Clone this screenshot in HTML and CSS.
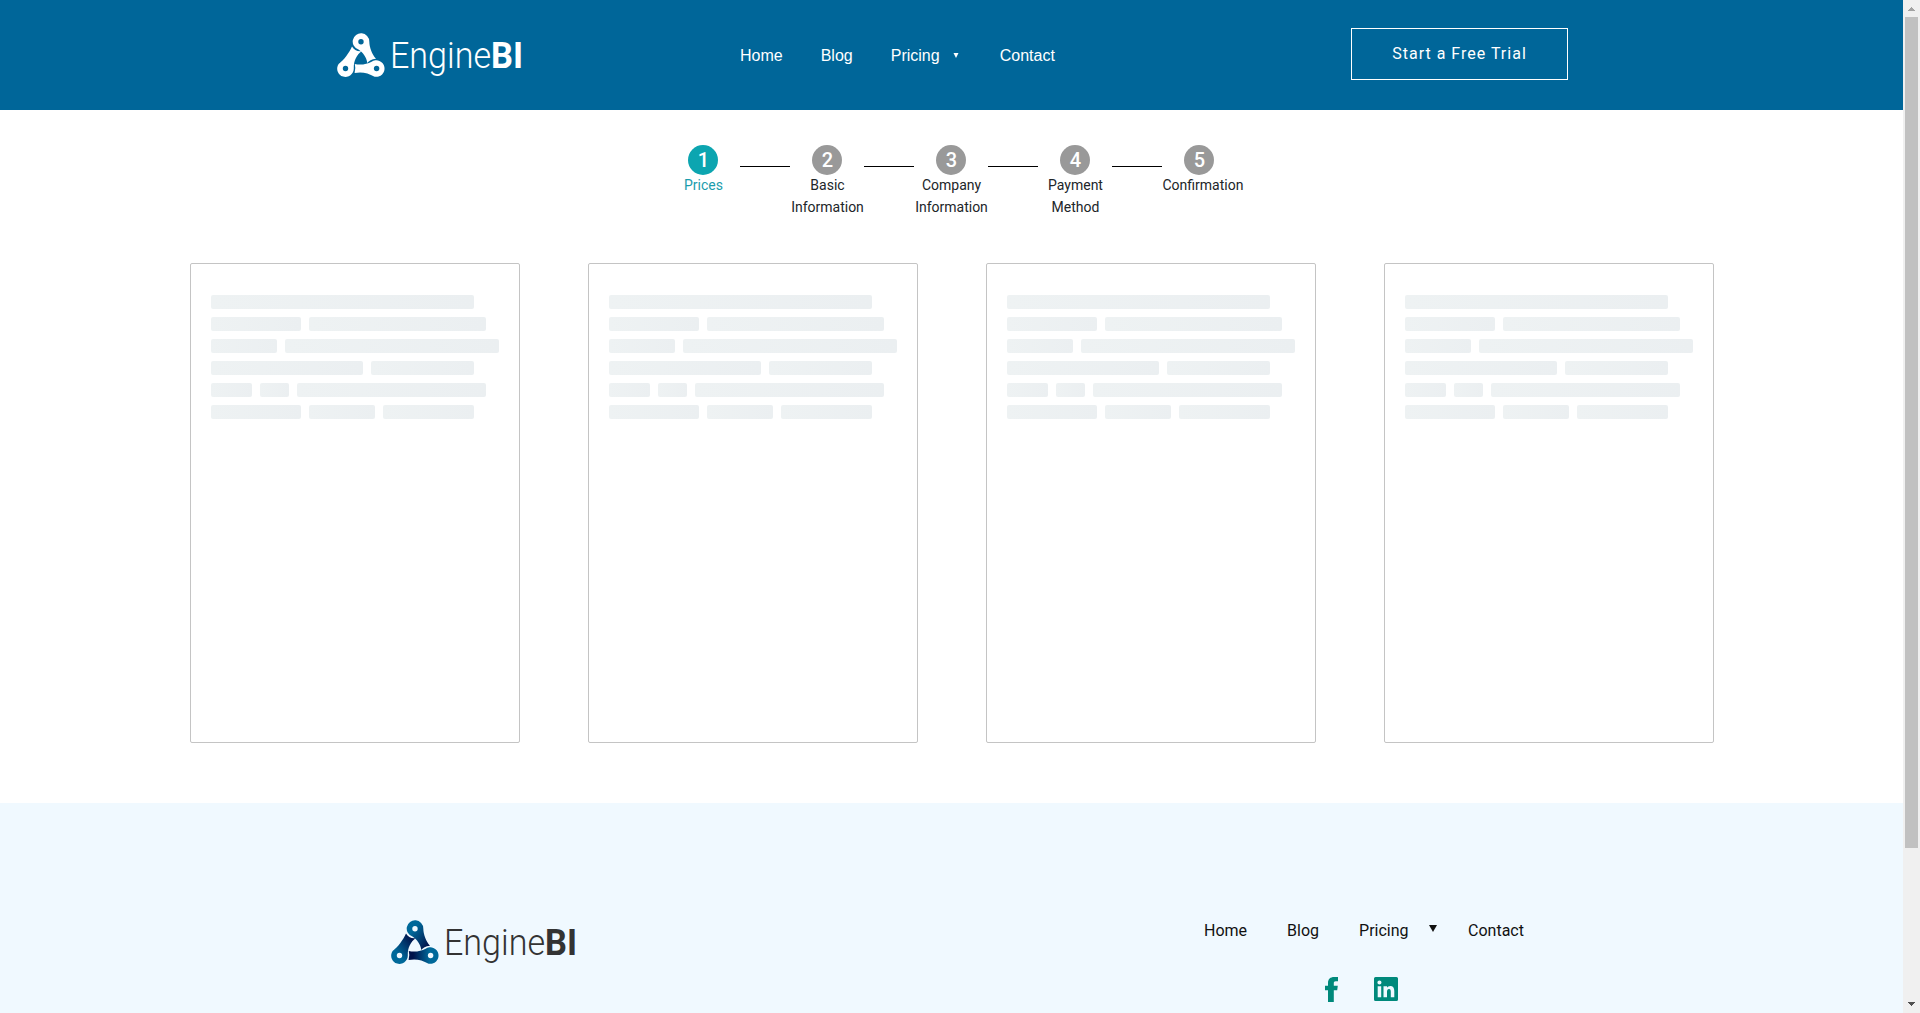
FILE: index.html
```html
<!DOCTYPE html>
<html lang="en">
<head>
<meta charset="utf-8">
<title>EngineBI - Prices</title>
<link rel="stylesheet" href="styles.css">
</head>
<body>
<svg class="defs" width="0" height="0" aria-hidden="true">
  <defs>
    <linearGradient id="blueA" x1="0" y1="1" x2="1" y2="0"><stop offset=".3" stop-color="#00699a"/><stop offset=".85" stop-color="#00124a"/></linearGradient>
    <linearGradient id="blueB" x1="0" y1="0" x2="1" y2="1"><stop offset=".3" stop-color="#00699a"/><stop offset=".9" stop-color="#00124a"/></linearGradient>
    <linearGradient id="blueC" x1="1" y1="0" x2="0" y2="0"><stop offset=".3" stop-color="#00699a"/><stop offset=".85" stop-color="#00124a"/></linearGradient>
    <symbol id="logo" viewBox="0 0 190 50">
      <g class="chain">
        <path class="link-a" d="M1.600 31 C7 27 12 20 15 13.500 C17 17 20 18.600 24.500 18.200 C19.500 22 16.500 28 16.800 35.600 A8.300 8.300 0 1 1 1.600 31Z"/>
        <path class="link-b" d="M32.300 8.500 C32.500 15 35 21 39 25.700 C34.500 26 32 28 30.300 30 C29.500 24 26 19.500 21.500 16.500 A8.300 8.300 0 1 1 32.300 8.500Z"/>
        <path class="link-c" d="M37.600 43.700 C31 39.800 25 38.600 17.600 39.900 Q19 35.500 17.800 31 C24 32.500 30 31 34.600 28.700 A8.300 8.300 0 1 1 37.600 43.700Z"/>
        <circle class="hole" cx="24" cy="8.700" r="2.700"/>
        <circle class="hole" cx="8.500" cy="35.500" r="2.700"/>
        <circle class="hole" cx="39.600" cy="35.500" r="2.700"/>
      </g>
      <text class="word-light" x="53" y="34.500" textLength="101" lengthAdjust="spacingAndGlyphs">Engine</text>
      <text class="word-bold" x="154" y="34.500" textLength="32" lengthAdjust="spacingAndGlyphs">BI</text>
    </symbol>
  </defs>
</svg>
<div class="window">
  <div class="page">
    <header class="header">
      <svg class="logo logo-white" width="190" height="50"><use href="#logo"/></svg>
      <nav class="nav">
        <a>Home</a><a>Blog</a><a class="has-menu">Pricing<svg width="6" height="5" viewBox="0 0 6 5"><path d="M.5 0H5.500L3 5Z" fill="currentColor"/></svg></a><a>Contact</a>
      </nav>
      <a class="trial">Start a Free Trial</a>
    </header>
    <main class="main">
      <ol class="steps">
        <li class="step active"><span class="num">1</span><span class="label">Prices</span></li>
        <li class="line"></li>
        <li class="step"><span class="num">2</span><span class="label">Basic Information</span></li>
        <li class="line"></li>
        <li class="step"><span class="num">3</span><span class="label">Company Information</span></li>
        <li class="line"></li>
        <li class="step"><span class="num">4</span><span class="label">Payment Method</span></li>
        <li class="line"></li>
        <li class="step"><span class="num">5</span><span class="label">Confirmation</span></li>
      </ol>
      <section class="cards">
        <div class="card">
          <div class="row"><i class="w263"></i></div>
          <div class="row"><i class="w90"></i><i class="w177"></i></div>
          <div class="row"><i class="w66"></i><i class="w214"></i></div>
          <div class="row"><i class="w152"></i><i class="w103"></i></div>
          <div class="row"><i class="w41"></i><i class="w29"></i><i class="w189"></i></div>
          <div class="row"><i class="w90"></i><i class="w66"></i><i class="w91"></i></div>
        </div>
        <div class="card">
          <div class="row"><i class="w263"></i></div>
          <div class="row"><i class="w90"></i><i class="w177"></i></div>
          <div class="row"><i class="w66"></i><i class="w214"></i></div>
          <div class="row"><i class="w152"></i><i class="w103"></i></div>
          <div class="row"><i class="w41"></i><i class="w29"></i><i class="w189"></i></div>
          <div class="row"><i class="w90"></i><i class="w66"></i><i class="w91"></i></div>
        </div>
        <div class="card">
          <div class="row"><i class="w263"></i></div>
          <div class="row"><i class="w90"></i><i class="w177"></i></div>
          <div class="row"><i class="w66"></i><i class="w214"></i></div>
          <div class="row"><i class="w152"></i><i class="w103"></i></div>
          <div class="row"><i class="w41"></i><i class="w29"></i><i class="w189"></i></div>
          <div class="row"><i class="w90"></i><i class="w66"></i><i class="w91"></i></div>
        </div>
        <div class="card">
          <div class="row"><i class="w263"></i></div>
          <div class="row"><i class="w90"></i><i class="w177"></i></div>
          <div class="row"><i class="w66"></i><i class="w214"></i></div>
          <div class="row"><i class="w152"></i><i class="w103"></i></div>
          <div class="row"><i class="w41"></i><i class="w29"></i><i class="w189"></i></div>
          <div class="row"><i class="w90"></i><i class="w66"></i><i class="w91"></i></div>
        </div>
      </section>
    </main>
    <footer class="footer">
      <svg class="logo logo-color" width="190" height="50"><use href="#logo"/></svg>
      <div class="foot-right">
        <nav class="foot-nav">
          <a>Home</a><a>Blog</a><a class="has-menu">Pricing<svg width="8" height="7" viewBox="0 0 8 7"><path d="M0 0H8L4 7Z" fill="currentColor"/></svg></a><a>Contact</a>
        </nav>
        <div class="social">
          <svg width="13" height="25" viewBox="0 0 13 25"><path d="M3 25V13.200H0V8.800H3V6C3 2 5.300 0 9.200 0H13V4.300H10.700C9.300 4.300 8.800 5 8.800 6.200V8.800H12.800L12.200 13.200H8.800V25Z" fill="#00897b"/></svg>
          <svg width="24" height="24" viewBox="0 0 24 24"><path fill="#00897b" fill-rule="evenodd" d="M1.500 0H22.500Q24 0 24 1.500V22.500Q24 24 22.500 24H1.500Q0 24 0 22.500V1.500Q0 0 1.500 0ZM3.700 9.200V20.300H7.200V9.200ZM5.450 3.500A2 2 0 1 0 5.450 7.600A2 2 0 1 0 5.450 3.500ZM9.500 9.200V20.300H13V14.800C13 13 13.700 11.900 15 11.900C16.400 11.900 16.800 13 16.800 14.800V20.300H20.300V14C20.300 10.700 19 8.900 16.300 8.900C14.700 8.900 13.600 9.700 13 10.700V9.200Z"/></svg>
        </div>
      </div>
    </footer>
  </div>
  <div class="scrollbar">
    <svg width="7" height="4" viewBox="0 0 7 4"><path d="M3 0H4V1H5V2H6V3H7V4H0V3H1V2H2V1H3Z" fill="#a3a3a3"/></svg>
    <div class="thumb"></div>
    <svg class="down" width="7" height="4" viewBox="0 0 7 4"><path d="M0 0H7V1H6V2H5V3H4V4H3V3H2V2H1V1H0Z" fill="#505050"/></svg>
  </div>
</div>
</body>
</html>
```
FILE: styles.css
```css
* { box-sizing: border-box; }
body { margin: 0; overflow: hidden; font-family: Roboto, "Liberation Sans", sans-serif; background: #fff; }
.defs { display: block; }
.window { display: flex; height: 1013px; overflow: hidden; }
.page { width: 1903px; height: 1013px; overflow: hidden; display: flex; flex-direction: column; }

.header { display: flex; height: 110px; flex: none; background: #006699; color: #fff; padding-left: 337px; }
.logo { flex: none; }
.header .logo { margin-top: 33px; }
.word-light { font: 300 36px Roboto, sans-serif; }
.word-bold { font: 700 36px Roboto, sans-serif; }
.logo-white { fill: #fff; --a: #fff; --b: #fff; --c: #fff; --hole: #006699; }
.logo-color { fill: #333; --a: url(#blueA); --b: url(#blueB); --c: url(#blueC); --hole: #f0f9ff; }
.link-a { fill: var(--a); }
.link-b { fill: var(--b); }
.link-c { fill: var(--c); }
.hole { fill: var(--hole); }

.nav { display: flex; gap: 38px; width: 611px; margin-left: 213px; padding-top: 47px; font: 16px/18px "Liberation Sans", Arial, sans-serif; }
.nav .has-menu { display: flex; width: 71px; }
.nav .has-menu svg { margin: 6px 0 0 13px; }
.trial { width: 217px; height: 52px; margin-top: 28px; border: 1px solid #fff; text-align: center; font-size: 16px; line-height: 50px; letter-spacing: 1px; }

.main { height: 693px; flex: none; padding-top: 35px; }
.steps { list-style: none; display: flex; height: 118px; margin: 0 0 0 666px; padding: 0; }
.step { width: 74px; flex: none; display: flex; flex-direction: column; align-items: center; }
.num { width: 30px; height: 30px; border-radius: 50%; background: #999; color: #fff; font-size: 20px; font-weight: 500; line-height: 30px; text-align: center; padding-left: 1px; }
.label { width: 74px; font-size: 14px; line-height: 22px; color: #212529; text-align: center; margin: -1px 0 0 1px; }
.active .num { background: #0ca5b0; }
.active .label { color: #1a9cac; }
.line { width: 50px; height: 1px; flex: none; background: #000; margin-top: 21px; }

.cards { display: flex; gap: 68px; padding-left: 190px; }
.card { width: 330px; height: 480px; flex: none; border: 1px solid #c4c4c4; border-radius: 2px; padding: 31px 20px; display: flex; flex-direction: column; gap: 8px; }
.row { display: flex; gap: 8px; height: 14px; }
.row i { height: 14px; border-radius: 2px; background: linear-gradient(90deg, #eef2f3, #ebeff1); }
.w263 { width: 263px; }
.w90 { width: 90px; }
.w177 { width: 177px; }
.w66 { width: 66px; }
.w214 { width: 214px; }
.w152 { width: 152px; }
.w103 { width: 103px; }
.w41 { width: 41px; }
.w29 { width: 29px; }
.w189 { width: 189px; }
.w91 { width: 91px; }

.footer { flex: 1; display: flex; background: #f0f9ff; padding: 117px 0 0 391px; }
.foot-right { margin-left: 622px; }
.foot-nav { display: flex; gap: 40px; padding-left: 1px; font-size: 16px; line-height: 22px; color: #111; }
.foot-nav .has-menu { display: flex; width: 69px; }
.foot-nav .has-menu svg { flex: none; margin: 5px 0 0 20px; }
.social { display: flex; gap: 36px; margin: 35px 0 0 122px; }

.scrollbar { width: 17px; background: #f0f0f0; display: flex; flex-direction: column; align-items: center; padding: 7px 0; }
.thumb { width: 13px; height: 831px; margin-top: 6px; background: #c1c1c1; }
.down { margin-top: auto; }
```
